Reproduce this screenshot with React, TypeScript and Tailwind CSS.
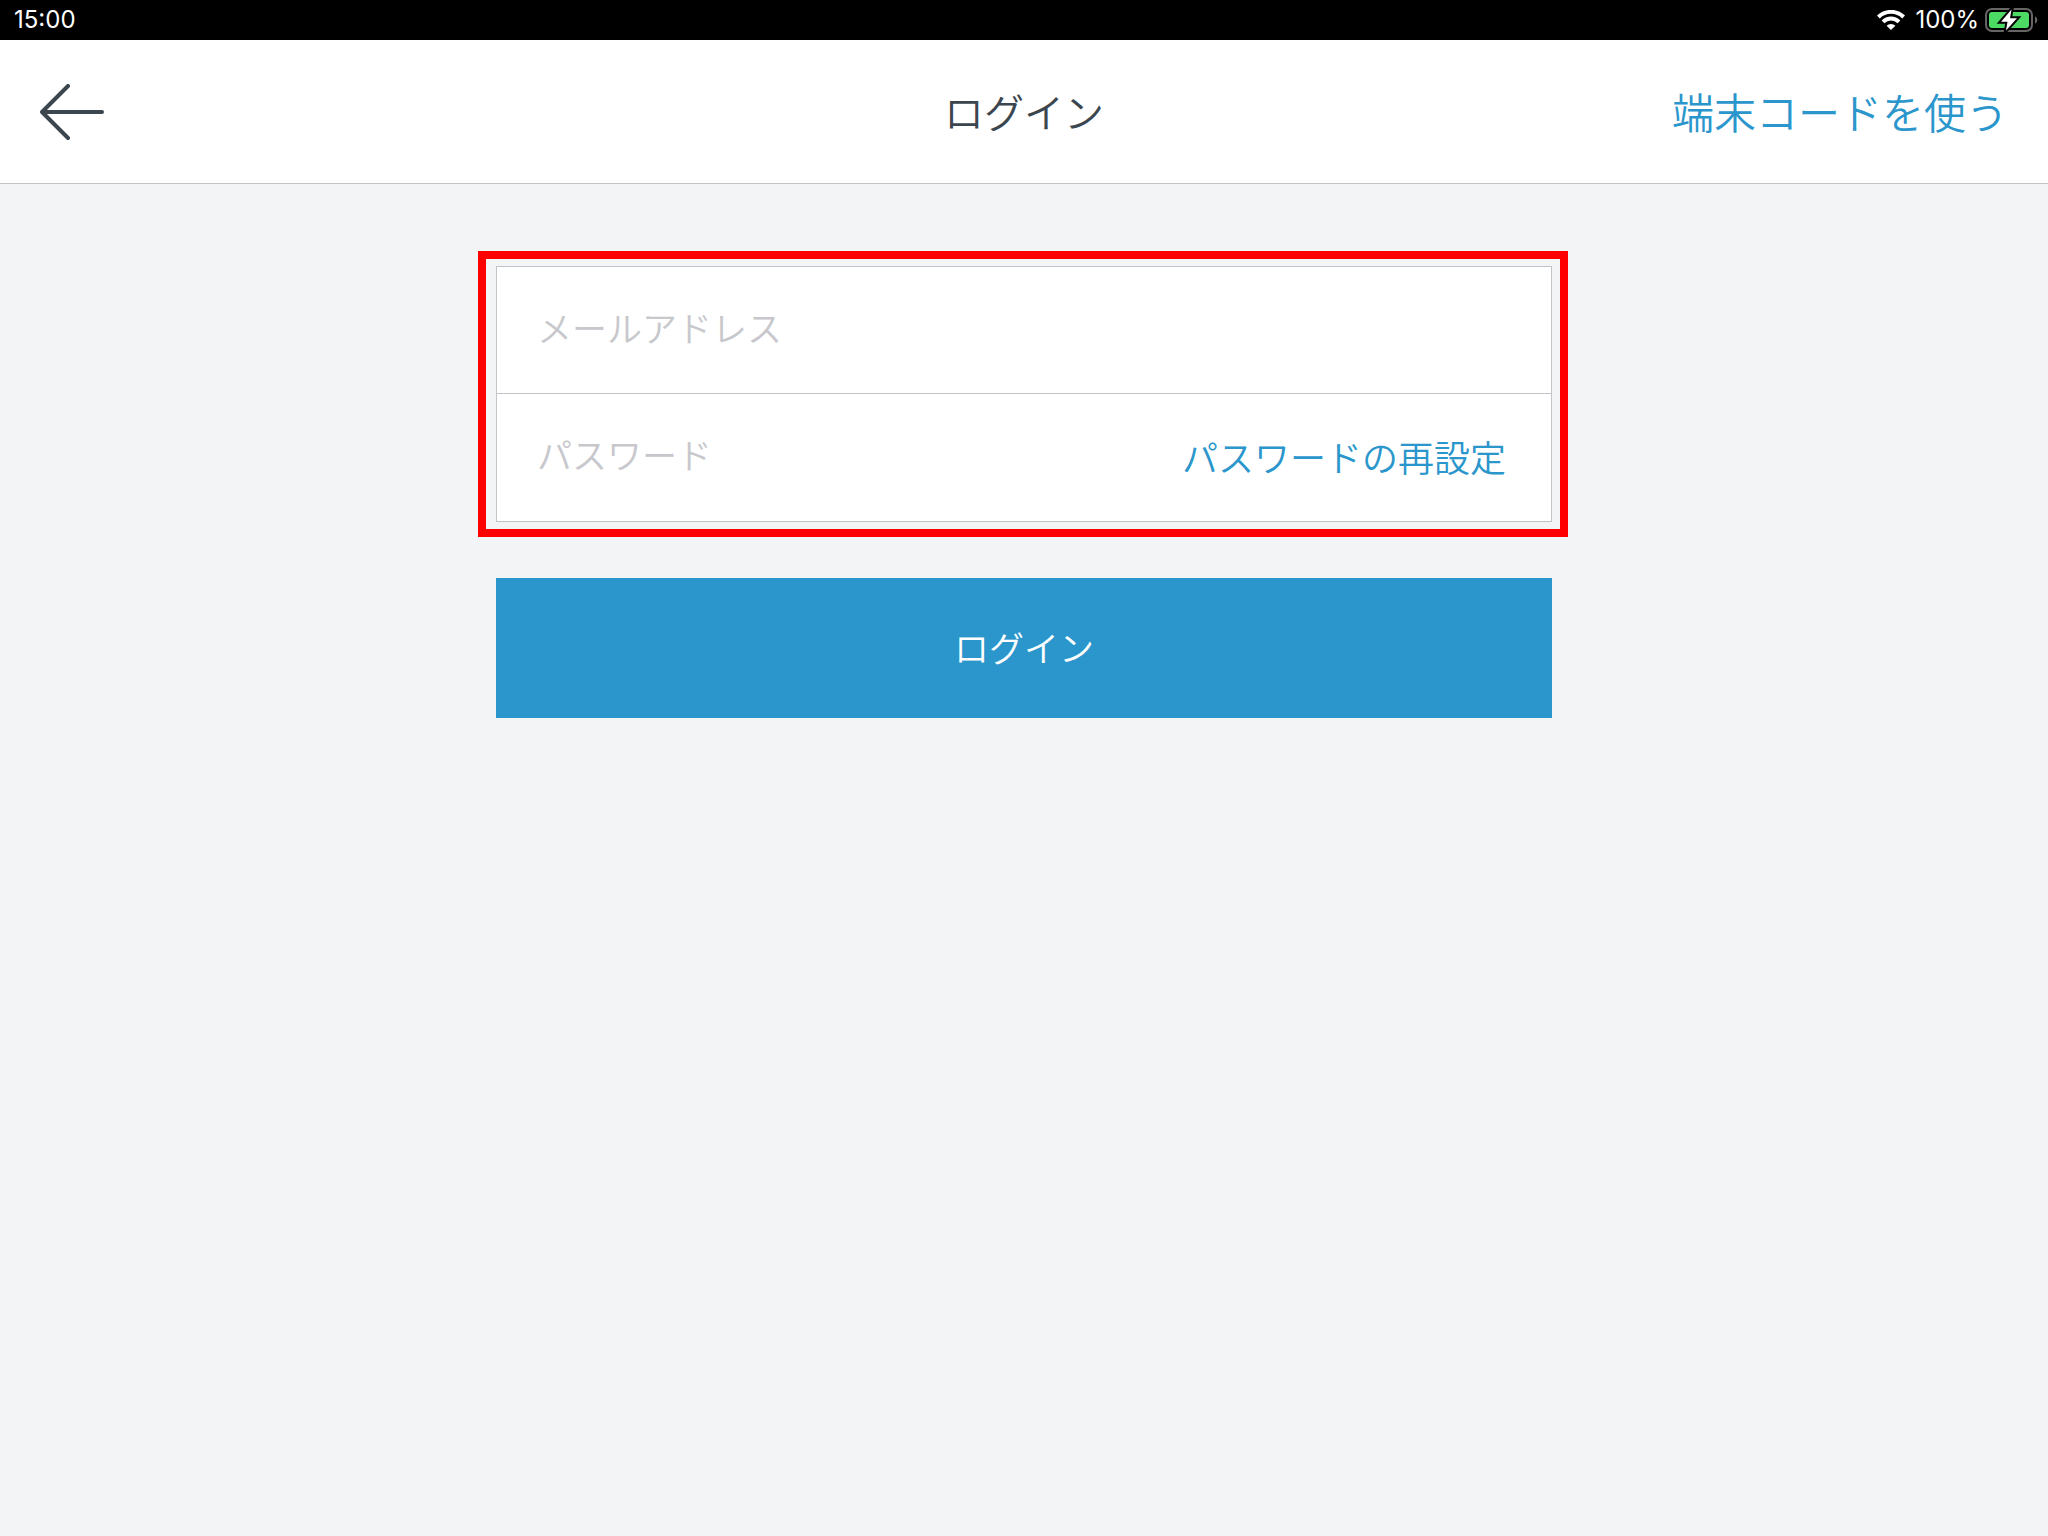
import { useState } from "react";

const App = () => {
  const [email, setEmail] = useState("");
  const [password, setPassword] = useState("");

  function handleSubmit(e: React.FormEvent) {
    e.preventDefault();
  }

  return (
    <div className="flex min-h-screen flex-col bg-[#f2f4f6] font-['Noto_Sans_CJK_JP',sans-serif] font-[350] text-[#3c464e]">
      <StatusBar />
      <Header />
      <main className="flex justify-center px-10 pt-[82px]">
        <form className="w-full max-w-[1056px]" onSubmit={handleSubmit}>
          <div className="relative border border-[#c1c5c9] bg-white">
            <div className="flex h-[127px] border-b border-[#c1c5c9]">
              <input
                className="min-w-0 flex-1 px-10 pb-[6px] text-[35px] placeholder:text-[#c7c7cc] focus:outline-none"
                type="email"
                aria-label="メールアドレス"
                placeholder="メールアドレス"
                value={email}
                onChange={(e) => setEmail(e.target.value)}
              />
            </div>
            <div className="flex h-[127px]">
              <input
                className="min-w-0 flex-1 px-10 pb-[6px] text-[35px] placeholder:text-[#c7c7cc] focus:outline-none"
                type="password"
                aria-label="パスワード"
                placeholder="パスワード"
                value={password}
                onChange={(e) => setPassword(e.target.value)}
              />
              <a href="#reset" className="self-center pr-[45px] pb-1 text-4xl text-[#2b96cc]">パスワードの再設定</a>
            </div>
            <div className="pointer-events-none absolute -inset-y-4 -right-[17px] -left-[19px] border-8 border-[#ff0000]" />
          </div>
          <button type="submit" className="mt-14 h-[140px] w-full bg-[#2b96cc] pb-[2px] text-[35px] text-white">
            ログイン
          </button>
        </form>
      </main>
    </div>
  );
};

export default App;

const StatusBar = () => {
  return (
    <div className="flex h-10 items-center justify-between bg-black pr-[10px] pl-[14px] font-['Inter',sans-serif] text-2xl font-normal text-white">
      <time>15:00</time>
      <div className="flex items-center">
        <WifiIcon />
        <span className="mr-[6px] ml-[10px]">100%</span>
        <BatteryIcon />
      </div>
    </div>
  );
};

const Header = () => {
  return (
    <header className="grid h-36 grid-cols-3 items-center border-b border-[#c1c5c9] bg-white px-10">
      <button type="button" aria-label="戻る" className="justify-self-start">
        <svg width="64" height="56" viewBox="0 0 64 56" fill="none" stroke="#3c464e" strokeWidth="4" strokeLinecap="round" strokeLinejoin="round">
          <path d="M28 2 L2 28 L28 54 M2 28 H62" />
        </svg>
      </button>
      <h1 className="justify-self-center pb-[2px] text-[40px]">ログイン</h1>
      <a href="#device-code" className="justify-self-end pb-[2px] text-[42px] whitespace-nowrap text-[#2b96cc]">端末コードを使う</a>
    </header>
  );
};

const WifiIcon = () => {
  return (
    <svg width="28" height="20" viewBox="0 0 28 20" fill="none" stroke="white" strokeWidth="4">
      <path d="M1.4 7 A18 18 0 0 1 26.6 7" />
      <path d="M6 11.8 A11.4 11.4 0 0 1 22 11.8" />
      <path d="M14 20 L9.6 15.8 A6 6 0 0 1 18.4 15.8 Z" fill="white" stroke="none" />
    </svg>
  );
};

const BatteryIcon = () => {
  return (
    <svg width="53" height="24" viewBox="0 0 53 24">
      <rect x="1" y="1" width="46" height="22" rx="6" fill="none" stroke="#666" strokeWidth="2" />
      <rect x="4" y="4" width="40" height="16" rx="3" fill="#4cd964" />
      <path d="M50 8.2 A4.2 4.2 0 0 1 50 15.8 Z" fill="#666" />
      <path d="M26.5 1.5 L16 13.8 H22.5 L21 22.5 L32 10.2 H25 Z" fill="white" stroke="black" strokeWidth="4" paintOrder="stroke" />
    </svg>
  );
};
